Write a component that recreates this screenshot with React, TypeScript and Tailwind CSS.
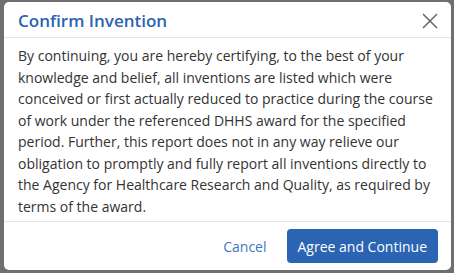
export default function App() {
  return (
    <div className="h-[273px] w-[454px] bg-[#6f6f6f] pl-[4px] pt-[2px] font-['Open_Sans',sans-serif]">
      <div className="flex h-[268px] w-[447px] flex-col rounded-[5px] bg-white">
        <div className="flex h-[36px] items-center justify-between border-b border-[#e5e5e5] pl-[14px] pr-[12px] pt-[2px]">
          <h2 className="text-[17px] font-semibold text-[#2a64b3]">Confirm Invention</h2>
          <svg width="18" height="18" viewBox="0 0 18 18" className="text-[#666]">
            <path d="M2 2 L16 16 M16 2 L2 16" stroke="currentColor" strokeWidth="1.5" fill="none" />
          </svg>
        </div>
        <p className="px-[14px] pt-[7px] text-[14px] leading-[21.5px] text-[#333]">
          By continuing, you are hereby certifying, to the best of your knowledge and belief, all
          inventions are listed which were conceived or first actually reduced to practice during the
          course of work under the referenced DHHS award for the specified period. Further, this
          report does not in any way relieve our obligation to promptly and fully report all
          inventions directly to the Agency for Healthcare Research and Quality, as required by terms
          of the award.
        </p>
        <div className="mt-auto flex h-[49px] items-center justify-end gap-[20px] border-t border-[#e5e5e5] pr-[13px]">
          <button className="text-[14px] text-[#3f76c2]">Cancel</button>
          <button className="h-[34px] rounded-[4px] bg-[#2a64b3] px-[11px] text-[14px] text-white">
            Agree and Continue
          </button>
        </div>
      </div>
    </div>
  )
}
